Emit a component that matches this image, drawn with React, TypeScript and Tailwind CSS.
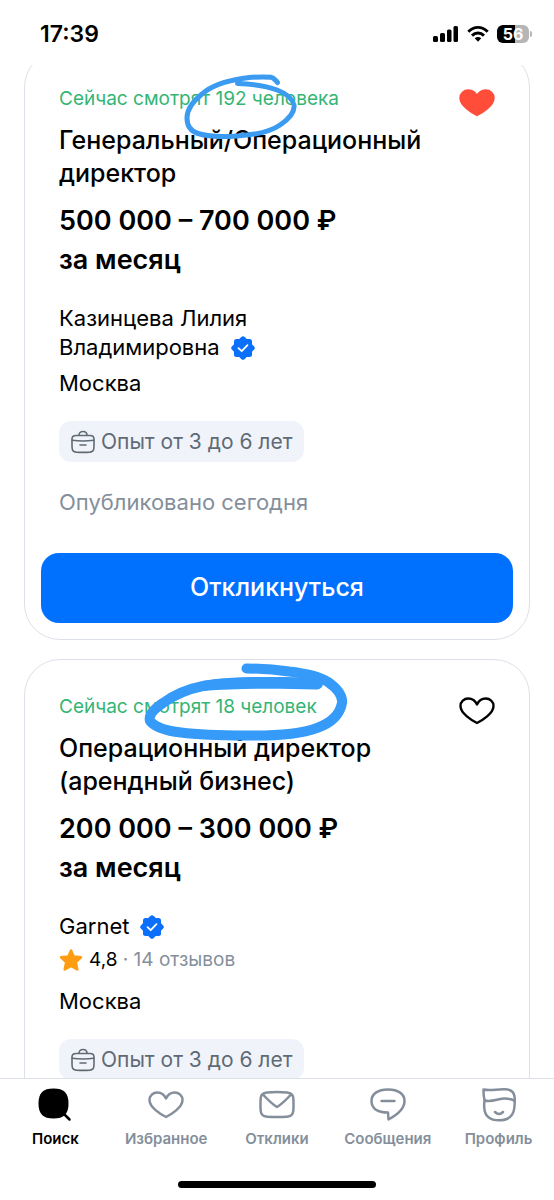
import type { ReactNode } from "react";

type Vacancy = {
  viewers: string;
  title: string;
  salary: string;
  company: string;
  rating?: string;
  reviews?: string;
  city: string;
  experience: string;
  published?: string;
  canApply: boolean;
  favorite: boolean;
  mark: ReactNode;
};

const HEART =
  "M18 26C13 23.5 1.5 16.5 1.5 9C1.5 4.5 5 1.5 9.300 1.500C13.200 1.500 16.300 3.800 18 7.500C19.700 3.800 22.800 1.500 26.700 1.500C31 1.500 34.500 4.500 34.500 9C34.500 16.500 23 23.500 18 26Z";

function SmallMark() {
  return (
    <svg
      aria-hidden="true"
      viewBox="180 70 120 72"
      className="pointer-events-none absolute -top-4 left-[121px] h-[72px] w-[120px]"
      fill="none"
      stroke="#3b9bf0"
      strokeWidth="5"
      strokeLinecap="round"
      strokeLinejoin="round"
    >
      <path d="M277.500 82.500C275 80 274 77.500 271 77.200C262 76.500 252 77 242 78.500C226 81 211 86 202 94C192 102 187 110 187 118C187 126 190 131 198 133.500C210 137 224 137 237 136C254 135 270 132 280 125C288 119.500 295 113 294 105C292 97 285 93 277 90C265 85.500 252 84 237.500 83.500" />
    </svg>
  );
}

function LargeMark() {
  return (
    <svg
      aria-hidden="true"
      viewBox="140 658 215 86"
      className="pointer-events-none absolute left-[81px] -top-9 h-[86px] w-[215px]"
      fill="none"
      stroke="#359af8"
      strokeWidth="10"
      strokeLinecap="round"
      strokeLinejoin="round"
    >
      <path d="M246.500 668.500C262 668.500 276 669.500 289 671.500C307 673.500 320 677 328 682C337 688 343 696 342 703C340 714 331 723 317 728C301 734 272 736 245 735.500C222 735.500 200 735 181 732.500C167 731 155 727 150 721C148 715 154 709 163 703C174 695 188 689 203 686C222 682.500 244 682 268 682" />
      <path
        fill="#359af8"
        stroke="none"
        d="M203 681C240 675.500 285 677 317 677.500A6 6 0 0 1 317 689.500C280 688.500 240 688 203 691Z"
      />
    </svg>
  );
}

function VerifiedIcon() {
  return (
    <svg aria-hidden="true" viewBox="0 0 24 24" className="h-6 w-6 shrink-0">
      <g fill="#0a70fb">
        <rect x="3" y="3" width="18" height="18" rx="2.500" />
        <rect x="3" y="3" width="18" height="18" rx="2.500" transform="rotate(45 12 12)" />
      </g>
      <path
        d="M7.500 12.200L10.700 15.200L16.500 9.200"
        fill="none"
        stroke="white"
        strokeWidth="1.800"
        strokeLinecap="round"
        strokeLinejoin="round"
      />
    </svg>
  );
}

function CaseIcon() {
  return (
    <svg
      aria-hidden="true"
      viewBox="0 0 24 24"
      className="h-6 w-6 shrink-0"
      fill="none"
      stroke="currentColor"
      strokeWidth="1.600"
      strokeLinecap="round"
    >
      <path d="M5 5.500H19C21.500 5.500 23 6.800 23 9V15C23 17.500 22.900 19 22.500 20C22 21.500 20.500 22 18.500 22.200C14 22.500 10 22.500 5.500 22.200C3.500 22 2 21.500 1.500 20C1.100 19 1 17.500 1 15V9C1 6.800 2.500 5.500 5 5.500Z" />
      <path d="M8 5.200C8 3 9.500 1.500 12 1.500C14.500 1.500 16 3 16 5.200M1.200 10.200C8 11.200 16 11.200 22.800 10.200M9 15H15" />
    </svg>
  );
}

function StarIcon() {
  return (
    <svg aria-hidden="true" viewBox="0 0 24 24" className="h-6 w-6 shrink-0">
      <path
        d="M12 2.500L14.600 8.600L22 9.300L16.800 14.200L18.300 21.500L12 18L5.700 21.500L7.200 14.200L2 9.300L9.400 8.600Z"
        fill="#ff9d12"
        stroke="#ff9d12"
        strokeWidth="2.500"
        strokeLinejoin="round"
      />
    </svg>
  );
}

function VacancyCard({ v }: { v: Vacancy }) {
  return (
    <article
      className={
        v.canApply
          ? "rounded-[36px] border border-[#dce1e8] px-4 pb-4 pt-[34px]"
          : "rounded-[36px] border border-[#dce1e8] px-4 pb-16 pt-[34px]"
      }
    >
      <div className="px-[18px]">
        <div className="relative flex items-start justify-between">
          <p className="text-[19px] leading-[26px] text-[#34b574]">{v.viewers}</p>
          <button
            type="button"
            aria-label="В избранное"
            aria-pressed={v.favorite}
            className="mt-[3px] h-7 w-9 shrink-0"
          >
            <svg
              aria-hidden="true"
              viewBox="0 0 36 28"
              className="h-7 w-9"
              fill={v.favorite ? "#ff4d3a" : "none"}
              stroke={v.favorite ? "#ff4d3a" : "black"}
              strokeWidth="2.400"
              strokeLinejoin="round"
            >
              <path d={HEART} />
            </svg>
          </button>
          {v.mark}
        </div>
        <h2 className="mt-[7px] whitespace-pre-line text-[25px] font-medium leading-[33px]">{v.title}</h2>
        <p className="mt-[11px] text-[27px] font-semibold leading-[39px]">
          {v.salary}
          <br />
          за месяц
        </p>
        <p className="mt-[25px] whitespace-pre-line text-[22px] leading-[29px]">
          {v.company}
          <span className="ml-[11px] inline-flex h-[29px] items-center align-top">
            <VerifiedIcon />
          </span>
        </p>
        {v.rating && (
          <div className="mb-3.5 mt-1.5 flex items-center gap-1.5 text-[19px] leading-[26px]">
            <StarIcon />
            <p>
              {v.rating} <span className="text-[#848f9b]">· {v.reviews}</span>
            </p>
          </div>
        )}
        <p className="mt-[7px] text-[22px] leading-[29px]">{v.city}</p>
        <div className="mt-[23px] flex">
          <span className="flex h-[41px] items-center gap-1.5 rounded-xl bg-[#f0f4fa] px-3 text-[21px] text-[#606a75]">
            <CaseIcon />
            {v.experience}
          </span>
        </div>
        {v.published && (
          <p className="mt-[26px] text-[22px] leading-[29px] text-[#848f9b]">{v.published}</p>
        )}
      </div>
      {v.canApply && (
        <button
          type="button"
          className="mt-[36px] h-[70px] w-full rounded-[18px] bg-[#0070ff] text-[25px] font-medium text-white"
        >
          Откликнуться
        </button>
      )}
    </article>
  );
}

const vacancies: Vacancy[] = [
  {
    viewers: "Сейчас смотрят 192 человека",
    title: "Генеральный/Операционный\nдиректор",
    salary: "500 000 – 700 000 ₽",
    company: "Казинцева Лилия\nВладимировна",
    city: "Москва",
    experience: "Опыт от 3 до 6 лет",
    published: "Опубликовано сегодня",
    canApply: true,
    favorite: true,
    mark: <SmallMark />,
  },
  {
    viewers: "Сейчас смотрят 18 человек",
    title: "Операционный директор\n(арендный бизнес)",
    salary: "200 000 – 300 000 ₽",
    company: "Garnet",
    rating: "4,8",
    reviews: "14 отзывов",
    city: "Москва",
    experience: "Опыт от 3 до 6 лет",
    canApply: false,
    favorite: false,
    mark: <LargeMark />,
  },
];

const tabs: { label: string; icon: ReactNode }[] = [
  {
    label: "Поиск",
    icon: (
      <>
        <path
          d="M16.500 1.500C27 1.500 31.500 6 31.500 16.500C31.500 27 27 31.500 16.500 31.500C6 31.500 1.500 27 1.500 16.500C1.500 6 6 1.500 16.500 1.500Z"
          fill="currentColor"
          stroke="none"
        />
        <path d="M27 27L32.500 32.500" />
      </>
    ),
  },
  { label: "Избранное", icon: <path transform="translate(0 4)" d={HEART} /> },
  {
    label: "Отклики",
    icon: (
      <>
        <path d="M8 5.500C14 4.900 22 4.900 28 5.500C32 6 34 7.500 34.300 11C34.600 15.500 34.600 20 34.300 24C34 27.500 32 29.300 28 29.700C22 30.200 14 30.200 8 29.700C4 29.300 2 27.500 1.700 24C1.400 20 1.400 15.500 1.700 11C2 7.500 4 6 8 5.500Z" />
        <path d="M4 7.500C9 13 13 17 18 20C23 17 27 13 32 7.500" />
      </>
    ),
  },
  {
    label: "Сообщения",
    icon: (
      <path d="M18 25.500C7 25.500 1.500 21 1.500 14C1.500 7 7.500 2.500 18 2.500C28.500 2.500 34.500 7 34.500 14C34.500 23 25 29 18.500 32.500L18 25.500ZM11.500 14H24.500" />
    ),
  },
  {
    label: "Профиль",
    icon: (
      <>
        <path d="M2.500 2.500C9 4 16 2 24 2.300C30 2.500 33 5 33.500 9.500C34 13 33.700 17 33.300 21C32.300 29.500 27 33.300 18 33.300C8.500 33.300 3.800 29 3.300 21C3 17.500 3.200 15 3.700 13.500C2.600 10 2.500 6 2.500 2.500Z" />
        <path d="M3.700 13.500C11 15.500 17 11.500 24 11.500C28 11.500 31 12 33.500 13.800M14 25C16.500 27.500 19.500 27.500 22 25" />
      </>
    ),
  },
];

export default function App() {
  return (
    <div className="flex h-screen flex-col overflow-hidden bg-white font-['Inter','Liberation_Sans',sans-serif] text-black">
      <header className="flex h-[65px] shrink-0 items-start justify-between pl-10 pr-[22px] pt-[21px]">
        <time className="text-[23px] font-semibold leading-[26px]">17:39</time>
        <div className="flex h-[26px] items-center gap-2">
          <svg aria-label="Сигнал" viewBox="0 0 26 18" className="h-[18px] w-[26px]">
            <rect x="0" y="11" width="5" height="6" rx="1.500" />
            <rect x="7" y="8" width="5" height="9" rx="1.500" />
            <rect x="14" y="4.500" width="4.500" height="12.500" rx="1.500" />
            <rect x="20.500" y="1" width="4.500" height="16" rx="1.500" />
          </svg>
          <svg aria-label="Wi-Fi" viewBox="0 0 22 18" className="h-[18px] w-[22px]">
            <g fill="none" stroke="black" strokeWidth="2.900">
              <path d="M1.300 6.700C7 0.900 15 0.900 20.700 6.700" />
              <path d="M5 10.600C8.500 7.200 13.500 7.200 17 10.600" />
            </g>
            <path d="M7.700 13.300C9.700 11.500 12.300 11.500 14.300 13.300L11 16.800Z" />
          </svg>
          <div className="flex items-center gap-px">
            <span className="flex h-[18px] w-8 items-center justify-center rounded-md bg-linear-to-r from-black from-55% to-[#b5b5b5] to-55% text-[16px] font-bold leading-none text-white">
              56
            </span>
            <span className="h-1.5 w-0.5 rounded-r-full bg-[#b5b5b5]" />
          </div>
        </div>
      </header>
      <main className="min-h-0 flex-1 overflow-hidden">
        <div className="-mt-3.5 flex flex-col gap-[19px] px-6">
          {vacancies.map((v) => (
            <VacancyCard key={v.title} v={v} />
          ))}
        </div>
      </main>
      <footer className="flex h-[122px] shrink-0 flex-col items-center justify-between border-t border-[#dce1e8] bg-white pb-3">
        <nav className="grid w-full grid-cols-5 pt-2">
          {tabs.map((tab, i) => (
            <a
              key={tab.label}
              href="#"
              aria-current={i === 0 ? "page" : undefined}
              className={
                i === 0
                  ? "flex flex-col items-center gap-1.5 text-black"
                  : "flex flex-col items-center gap-1.5 text-[#848f9b]"
              }
            >
              <svg
                aria-hidden="true"
                viewBox="0 0 36 36"
                className="h-9 w-9"
                fill="none"
                stroke="currentColor"
                strokeWidth="2.500"
                strokeLinecap="round"
                strokeLinejoin="round"
              >
                {tab.icon}
              </svg>
              <span className="text-[15px] font-semibold leading-5">{tab.label}</span>
            </a>
          ))}
        </nav>
        <div className="h-[7px] w-[198px] rounded-full bg-black" />
      </footer>
    </div>
  );
}
